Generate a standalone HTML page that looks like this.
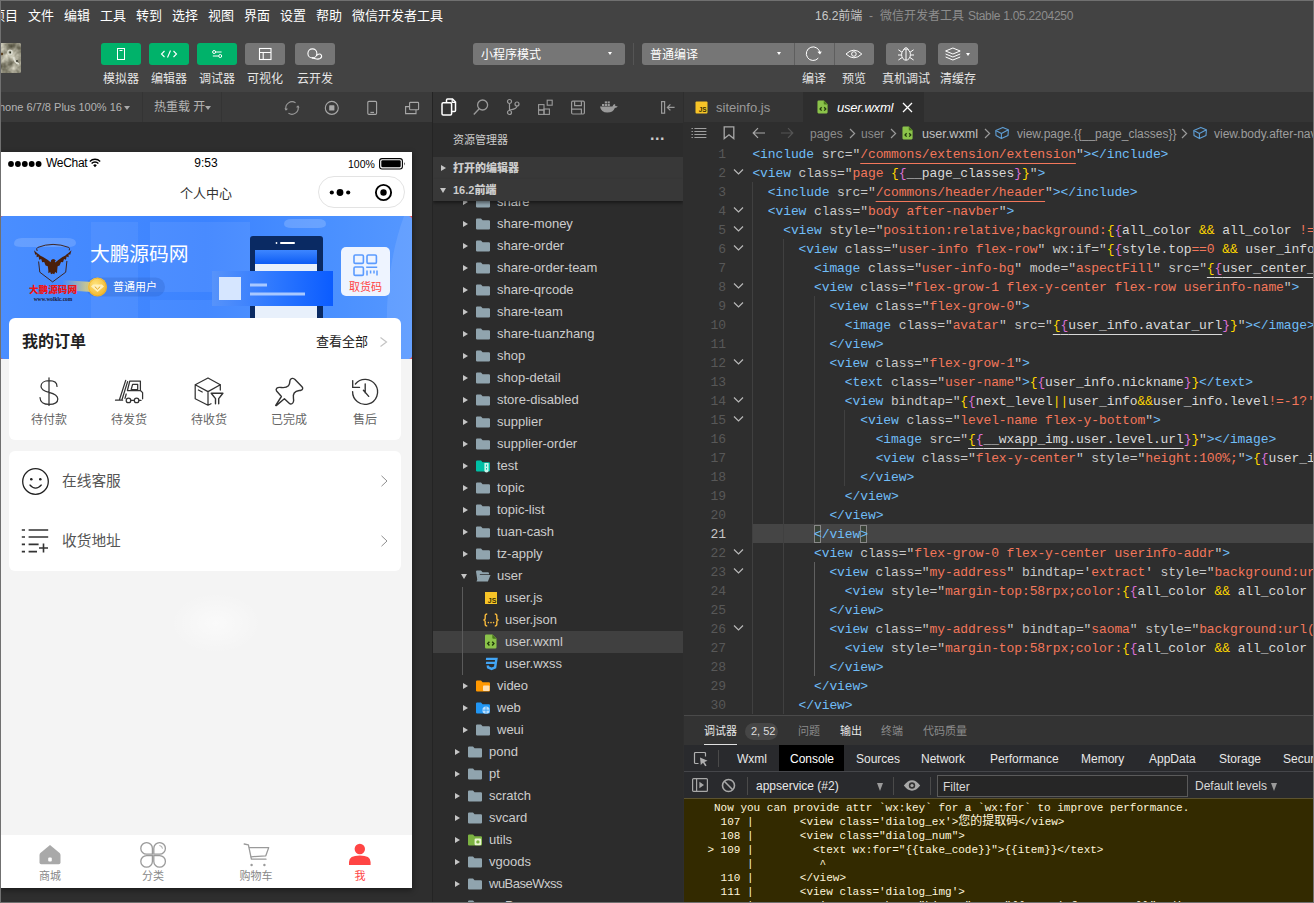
<!DOCTYPE html>
<html lang="zh-CN">
<head>
<meta charset="utf-8">
<title>16.2前端 - 微信开发者工具 Stable 1.05.2204250</title>
<style>
*{box-sizing:border-box;margin:0;padding:0}
html,body{width:1314px;height:903px;overflow:hidden;background:#2e2e2e}
body{font-family:"Liberation Sans","Noto Sans CJK SC",sans-serif;color:#ccc;position:relative;font-size:12px}
.abs{position:absolute}
.nw{white-space:nowrap}
/* ---------- top bars ---------- */
#menubar{left:0;top:0;width:1314px;height:30px;background:#434343}
#menubar .mi{position:absolute;top:6px;font-size:13px;line-height:20px;color:#fff;white-space:nowrap}
#title{position:absolute;top:6px;left:815px;font-size:12px;line-height:20px;white-space:nowrap;color:#8d8d8d}
#title b{font-weight:normal;color:#c8c8c8}
#toolbar{left:0;top:30px;width:1314px;height:62px;background:#434343}
.tbtn{position:absolute;top:13px;width:40px;height:22px;border-radius:3px;background:#00b26a}
.tbtn.g{background:#767676}
.tlab{position:absolute;top:39.5px;font-size:12px;line-height:18px;color:#e6e6e6;white-space:nowrap;text-align:center}
.dd{position:absolute;top:13px;height:22px;background:#767676;border-radius:3px;color:#fff;font-size:12px;line-height:24px;padding-left:8px;white-space:nowrap}
.caret{position:absolute;width:0;height:0;border-left:2.500px solid transparent;border-right:2.500px solid transparent;border-top:3.500px solid #fff}
/* ---------- simulator ---------- */
#sim{left:0;top:92px;width:432px;height:811px;background:#2e2e2e}
#devbar{left:0;top:0;width:432px;height:30px;background:#3a3a3a}
#vdiv{left:432px;top:92px;width:1px;height:811px;background:#242424}

/* device bar */
#devbar span{position:absolute;top:6px;font-size:11px;line-height:18px;color:#b4b4b4;white-space:nowrap}
.dcar{position:absolute;top:14px;width:0;height:0;border-left:3px solid transparent;border-right:3px solid transparent;border-top:4px solid #a8a8a8}
.dvl{position:absolute;top:0;width:1px;height:30px;background:#343434}
/* phone */
#phone{left:0;top:60px;width:412px;height:736px;background:#f4f4f4;overflow:hidden;color:#000;box-shadow:0 2px 6px rgba(0,0,0,.45);font-family:"Liberation Sans","Noto Sans CJK SC",sans-serif}
#pstat{left:0;top:0;width:412px;height:64px;background:#fff}
#banner{left:0;top:64px;width:412px;height:143px;overflow:hidden;border-radius:3px}
.card{position:absolute;left:9px;width:392px;background:#fff;border-radius:6px}
.oi{position:absolute;top:94px;width:60px;margin-left:-30px;text-align:center;font-size:12px;line-height:16px;color:#666;white-space:nowrap}
.oic{position:absolute;top:58px;width:32px;height:32px;margin-left:-16px}
.row{position:absolute;left:0;width:392px;height:60px}
.row span{position:absolute;left:53px;top:20px;font-size:14.7px;line-height:20px;color:#555;white-space:nowrap}
#tabbar{left:0;top:683px;width:412px;height:53px;background:#fff}
.tl{position:absolute;top:34px;width:60px;text-align:center;font-size:11px;line-height:14px;color:#888;white-space:nowrap}
.tab{position:absolute;top:0;width:103px;height:53px;text-align:center}
.tab span{position:absolute;left:0;width:103px;top:34px;font-size:11px;line-height:14px;color:#8a8a8a}
.tab svg{position:absolute;left:38px;top:6px}
/* ---------- explorer ---------- */
#side{left:433px;top:92px;width:250px;height:811px;background:#2c2c2c;overflow:hidden}
#actbar{left:0;top:0;width:250px;height:31px;background:#333}

#side .tr{position:absolute;left:0;width:250px;height:22px;font-size:13px;line-height:22px;color:#ccc;white-space:nowrap}
#side .tr.sel{background:#404040}
#side .tr b{position:absolute;top:0;font-weight:normal}
.arr{position:absolute;top:8px;width:0;height:0;border-top:3.5px solid transparent;border-bottom:3.5px solid transparent;border-left:5px solid #c5c5c5}
.arrd{position:absolute;top:9px;width:0;height:0;border-left:3.5px solid transparent;border-right:3.5px solid transparent;border-top:5px solid #c5c5c5}
.fi{position:absolute;top:4px}
.sh{position:absolute;left:0;width:250px;height:22px;background:#383838;font-size:11px;font-weight:bold;line-height:22px;color:#ccc}
.sh b{position:absolute;left:20px;top:0}
/* ---------- editor ---------- */
#ed{left:684px;top:92px;width:630px;height:811px;background:#2e2e2e;overflow:hidden}

#tabs{left:0;top:0;width:630px;height:30px;background:#353535}
.tab1{position:absolute;top:0;height:30px;font-size:13px;line-height:31px;white-space:nowrap}
#bc{left:0;top:30px;width:630px;height:22px;background:#2e2e2e;font-size:12px;line-height:22px;color:#9d9d9d;white-space:nowrap}
#bc span{position:absolute;top:1px}
#code{left:0;top:52px;width:630px;height:571px;overflow:hidden;font-family:"Liberation Mono","DejaVu Sans Mono",monospace;font-size:13px;letter-spacing:-0.1px}
.ln{position:absolute;left:0;width:630px;height:19px;line-height:19px;white-space:pre}
.ln .no{position:absolute;left:0;top:1px;width:42px;text-align:right;color:#585858}
.ln .fd{position:absolute;left:49px;top:5px}
.ln .tx{position:absolute;left:68.400px;top:1px;color:#c8c8c8}
.t{color:#70bdf7}.a{color:#c8c8c8}.s{color:#f3775b}.y{color:#ffd700}.m{color:#da70d6}.v{color:#d8d8d8}.u{text-decoration:underline;text-underline-offset:5px;text-decoration-thickness:1px}
.ig{position:absolute;width:1px;background:#404040}

#panel{background:#333;border-top:1px solid #4a4a4a}
#ptabs span{position:absolute;top:7px;font-size:11px;line-height:16px;color:#8a8a8a;white-space:nowrap}
#dtabs{left:0;top:29px;width:630px;height:26px;background:#292a2d}
#dtabs span{position:absolute;top:1px;font-size:12px;line-height:26px;color:#e8e8e8;white-space:nowrap}
#dtool{left:0;top:55px;width:630px;height:27px;background:#292a2d;border-top:1px solid #45464a}
#cons{left:0;top:82px;width:630px;height:106px;background:#332a00;font-family:"Liberation Mono","Noto Sans CJK SC",monospace;font-size:11px;color:#fff6dc;overflow:hidden;border-top:1px solid #5c5330}
#cons div{position:absolute;left:0;white-space:pre;height:14px;line-height:14px}
</style>
</head>
<body>
<div id="menubar" class="abs"><span class="mi" style="left:-8px">项目</span><span class="mi" style="left:28px">文件</span><span class="mi" style="left:64px">编辑</span><span class="mi" style="left:100px">工具</span><span class="mi" style="left:136px">转到</span><span class="mi" style="left:172px">选择</span><span class="mi" style="left:208px">视图</span><span class="mi" style="left:244px">界面</span><span class="mi" style="left:280px">设置</span><span class="mi" style="left:316px">帮助</span><span class="mi" style="left:352px">微信开发者工具</span><span id="title"><b>16.2前端</b><span style="position:absolute;left:54px;top:0">-</span><span style="position:absolute;left:65px;top:0">微信开发者工具</span><span id="stb" style="position:absolute;left:153px;top:0;font-size:12px;letter-spacing:-0.3px">Stable 1.05.2204250</span></span></div>
<div id="toolbar" class="abs">
<div class="abs" id="avatar" style="left:0;top:13px;width:21px;height:30px;border-radius:0 2px 2px 0;overflow:hidden"><svg width="21" height="30" viewBox="0 0 21 30"><defs><filter id="stone" x="0" y="0" width="100%" height="100%" color-interpolation-filters="sRGB"><feTurbulence type="fractalNoise" baseFrequency="0.11" numOctaves="3" seed="11"/><feColorMatrix type="matrix" values="0.8 0 0 0 0.2  0.8 0 0 0 0.19  0.8 0 0 0 0.12  0 0 0 0 1"/></filter></defs><rect width="21" height="30" fill="#9a9888"/><rect width="21" height="30" filter="url(#stone)"/><ellipse cx="10" cy="9.500" rx="2.200" ry="2.400" fill="none" stroke="#d8d8cc" stroke-width="1.300"/><circle cx="10.200" cy="9.500" r="0.900" fill="#2a3020"/><path d="M13.500 14 q1 6 5.500 7" fill="none" stroke="#deded2" stroke-width="1.600"/><circle cx="17" cy="18" r="1" fill="#3a3a30"/><circle cx="2" cy="11" r="1.200" fill="#5a4020"/></svg></div>
<div class="tbtn" style="left:101px"><svg width="40" height="22" viewBox="0 0 40 22"><rect x="16.5" y="5.5" width="7" height="11" fill="none" stroke="#fff" stroke-width="1"/><line x1="18.5" y1="7.500" x2="21.500" y2="7.500" stroke="#fff" stroke-width="1"/></svg></div>
<div class="tbtn" style="left:149px"><svg width="40" height="22" viewBox="0 0 40 22"><path d="M15.5 8 L12.5 11 L15.5 14 M24.5 8 L27.5 11 L24.5 14 M21.5 7.5 L18.5 14.5" fill="none" stroke="#fff" stroke-width="1.1"/></svg></div>
<div class="tbtn" style="left:197px"><svg width="40" height="22" viewBox="0 0 40 22"><path d="M18.800 9 H24.600 M15.800 13 H21.600" fill="none" stroke="#fff" stroke-width="1"/><circle cx="17.100" cy="9" r="1.500" fill="none" stroke="#fff"/><circle cx="23.200" cy="13" r="1.500" fill="none" stroke="#fff"/></svg></div>
<div class="tbtn g" style="left:245px"><svg width="40" height="22" viewBox="0 0 40 22"><rect x="14.500" y="5.500" width="11.500" height="11" fill="none" stroke="#fff" stroke-width="1.100"/><path d="M14.500 9.500 H26 M18.200 9.500 V16.500" stroke="#fff" stroke-width="1.100" fill="none"/></svg></div>
<div class="tbtn g" style="left:295px"><svg width="40" height="22" viewBox="0 0 40 22"><circle cx="17.400" cy="10.400" r="4.500" fill="none" stroke="#fff" stroke-width="1.100"/><path d="M21.300 12.600 Q24.600 9.800 26.300 12 Q27.400 14.200 25 15.600 Q23.600 16.300 21.500 16 L17 14.900" fill="none" stroke="#fff" stroke-width="1.100"/></svg></div>
<span class="tlab" style="left:103px">模拟器</span>
<span class="tlab" style="left:151px">编辑器</span>
<span class="tlab" style="left:199px">调试器</span>
<span class="tlab" style="left:247px">可视化</span>
<span class="tlab" style="left:297px">云开发</span>
<div class="dd" style="left:473px;width:152px">小程序模式<i class="caret" style="right:13px;top:9px"></i></div>
<div class="abs" style="left:633px;top:13px;width:1px;height:22px;background:#555"></div>
<div class="dd" style="left:642px;width:232px;border-radius:3px">普通编译<i class="caret" style="right:93px;top:9px"></i></div>
<div class="abs" style="left:794px;top:13px;width:1px;height:22px;background:#5e5e5e"></div>
<div class="abs" style="left:834px;top:13px;width:1px;height:22px;background:#5e5e5e"></div>
<svg class="abs" style="left:795px;top:13px" width="39" height="22" viewBox="0 0 39 22"><path d="M23.300 15.100 A6.800 6.800 0 1 1 24.900 10.100" fill="none" stroke="#fff" stroke-width="1"/><path d="M22.400 8.800 L25 11.600 L26.800 8.400 Z" fill="#fff"/></svg>
<svg class="abs" style="left:835px;top:13px" width="39" height="22" viewBox="0 0 39 22"><path d="M11 11 Q18.900 3.400 26.800 11 Q18.900 18.600 11 11 Z" fill="none" stroke="#fff" stroke-width="1"/><circle cx="18.900" cy="11" r="2.300" fill="none" stroke="#fff"/></svg>
<div class="tbtn g" style="left:886px"><svg width="40" height="22" viewBox="0 0 40 22"><ellipse cx="20" cy="11.600" rx="4.400" ry="5.600" fill="none" stroke="#fff" stroke-width="1"/><path d="M17.400 6.800 Q20 2.600 22.600 6.800 M20 6.600 V17 M12.400 6.800 L15.900 9.200 M27.600 6.800 L24.100 9.200 M12 12 H15.600 M28 12 H24.400 M12.400 17 L16 14.600 M27.600 17 L24 14.600" fill="none" stroke="#fff" stroke-width="1"/></svg></div>
<div class="tbtn g" style="left:938px"><svg width="40" height="22" viewBox="0 0 40 22"><path d="M7.600 8 L14.900 5 L22.200 8 L14.900 11 Z M7.600 11 L14.900 14 L22.200 11 M7.600 14 L14.900 17 L22.200 14" fill="none" stroke="#fff" stroke-width="1" stroke-linejoin="round"/></svg><i class="caret" style="left:28px;top:9.500px"></i></div>
<span class="tlab" style="left:802px">编译</span>
<span class="tlab" style="left:842px">预览</span>
<span class="tlab" style="left:882px">真机调试</span>
<span class="tlab" style="left:940px">清缓存</span>
</div>
<div id="sim" class="abs"><div id="devbar" class="abs">
<span style="left:-1px">hone 6/7/8 Plus 100% 16</span><i class="dcar" style="left:124px"></i>
<i class="dvl" style="left:142px"></i>
<span style="left:154px;font-size:12px">热重载 开</span><i class="dcar" style="left:205px"></i>
<i class="dvl" style="left:221px"></i>
<svg class="abs" style="left:283px;top:7px" width="18" height="18" viewBox="0 0 18 18"><path d="M3 10.400 A6.200 6.200 0 0 1 12.600 3.900 M15 7.600 A6.200 6.200 0 0 1 5.400 14.100" fill="none" stroke="#9a9a9a" stroke-width="1.100"/><path d="M2 9.200 L3 10.800 L4.400 9.600 M16 8.800 L15 7.200 L13.600 8.400" fill="none" stroke="#9a9a9a" stroke-width="1.100"/></svg>
<svg class="abs" style="left:323px;top:7px" width="18" height="18" viewBox="0 0 18 18"><circle cx="8.800" cy="8.900" r="6.500" fill="none" stroke="#a8a8a8" stroke-width="1.100"/><rect x="6.200" y="6.300" width="5.200" height="5.200" rx="0.600" fill="#a8a8a8"/></svg>
<svg class="abs" style="left:363px;top:7px" width="18" height="18" viewBox="0 0 18 18"><rect x="4.800" y="2.400" width="8.800" height="13" rx="1.200" fill="none" stroke="#a8a8a8" stroke-width="1.100"/><path d="M7.400 13.400 h3.600" stroke="#a8a8a8" stroke-width="1.100"/></svg>
<svg class="abs" style="left:403px;top:7px" width="18" height="18" viewBox="0 0 18 18"><rect x="6.600" y="3.400" width="9" height="7.400" rx="0.800" fill="none" stroke="#a8a8a8" stroke-width="1.100"/><path d="M6.600 7.600 h-4 v7 h10.400 v-3.800" fill="none" stroke="#a8a8a8" stroke-width="1.100"/></svg>
</div>
<div id="phone" class="abs">
 <div id="pstat" class="abs">
  <svg class="abs" style="left:7px;top:8px" width="36" height="8" viewBox="0 0 36 8"><circle cx="4" cy="4" r="2.900" fill="#000"/><circle cx="10.900" cy="4" r="2.900" fill="#000"/><circle cx="17.800" cy="4" r="2.900" fill="#000"/><circle cx="24.700" cy="4" r="2.900" fill="#000"/><circle cx="31.600" cy="4" r="2.900" fill="#000"/></svg>
  <span class="abs nw" style="left:46px;top:3px;font-size:12px;line-height:16px;color:#000;letter-spacing:-0.300px">WeChat</span>
  <svg class="abs" style="left:89px;top:6px" width="12" height="10" viewBox="0 0 12 10"><path d="M0.800 3.400 a7.400 7.400 0 0 1 10.400 0 M2.600 5.400 a4.800 4.800 0 0 1 6.800 0" fill="none" stroke="#000" stroke-width="1.350"/><path d="M4.200 7.200 a2.600 2.600 0 0 1 3.600 0 L6 9.300 z" fill="#000"/></svg>
  <span class="abs nw" style="left:186px;width:40px;text-align:center;top:3px;font-size:12px;line-height:16px;color:#000">9:53</span>
  <span class="abs nw" style="left:348px;top:4px;font-size:10.500px;line-height:16px;color:#000">100%</span>
  <svg class="abs" style="left:379px;top:6px" width="27" height="12" viewBox="0 0 27 12"><rect x="0.6" y="0.6" width="22.8" height="10.4" rx="2.4" fill="none" stroke="#000" stroke-width="1.1"/><rect x="2.3" y="2.3" width="19.4" height="7" rx="1.2" fill="#000"/><path d="M25 4 q1.4 1.8 0 3.6 z" fill="#000"/></svg>
  <span class="abs nw" style="left:0;width:412px;text-align:center;top:32px;font-size:13px;line-height:20px;color:#333">个人中心</span>
  <div class="abs" style="left:318px;top:24px;width:87px;height:32px;border:1px solid #e3e3e3;border-radius:16px;background:#fff">
   <svg class="abs" style="left:0;top:0" width="85" height="30" viewBox="0 0 85 30"><circle cx="12.800" cy="15.500" r="2.100" fill="#000"/><circle cx="21" cy="15.500" r="3.400" fill="#000"/><circle cx="29.200" cy="15.500" r="2.100" fill="#000"/><circle cx="64.5" cy="15.5" r="7.6" fill="none" stroke="#000" stroke-width="1.9"/><circle cx="64.5" cy="15.5" r="3.2" fill="#000"/></svg>
  </div>
 </div>
 <div class="abs" style="left:0;top:64px;width:412px;height:143px;background:#ff4544"></div><div id="banner" class="abs">
<svg class="abs" style="left:0;top:0" width="412" height="143" viewBox="0 0 412 143">
<defs>
<linearGradient id="bg1" x1="0" x2="1" y1="0" y2="0"><stop offset="0" stop-color="#4a8eff"/><stop offset="0.5" stop-color="#3c83ff"/><stop offset="0.8" stop-color="#4a90ff"/><stop offset="1" stop-color="#5597ff"/></linearGradient>
<linearGradient id="scr" x1="0" x2="0" y1="0" y2="1"><stop offset="0" stop-color="#3d86ff"/><stop offset="1" stop-color="#0d5cf5"/></linearGradient>
<linearGradient id="crd" x1="0" x2="1" y1="0" y2="0"><stop offset="0" stop-color="#5793fa"/><stop offset="0.55" stop-color="#2b76ff"/><stop offset="1" stop-color="#0b5cff"/></linearGradient>
<radialGradient id="coin" cx="0.4" cy="0.35" r="0.7"><stop offset="0" stop-color="#ffe27a"/><stop offset="1" stop-color="#f0b429"/></radialGradient>
<linearGradient id="glow" x1="0" x2="1" y1="0" y2="0"><stop offset="0" stop-color="#ffe066" stop-opacity="0"/><stop offset="1" stop-color="#ffe066" stop-opacity="0.85"/></linearGradient>
</defs>
<rect width="412" height="143" rx="3" fill="url(#bg1)"/>
<rect x="91" y="6" width="47" height="137" fill="#fff" opacity="0.06"/>
<rect x="150" y="6" width="100" height="70" fill="#fff" opacity="0.07"/>
<rect x="150" y="84" width="100" height="59" fill="#fff" opacity="0.05"/>
<path d="M14 28 q0 -6 8 -6 h44 q10 0 10 5 q0 4 -8 4 h-46 q-8 0 -8 -3 z" fill="#fff" opacity="0.16"/>
<path d="M284 8 q0 -5 8 -5 h26 q8 0 8 5 q0 4 -8 4 h-26 q-8 0 -8 -4 z" fill="#fff" opacity="0.18"/>
<path d="M412 0 h-8 q-22 60 -16 143 h24 z" fill="#fff" opacity="0.1"/>
<!-- phone -->
<rect x="250" y="20" width="73" height="140" rx="3" fill="#0a2a63"/>
<circle cx="276.500" cy="27" r="0.9" fill="#fff"/><rect x="280" y="26" width="15" height="2" rx="1" fill="#fff"/>
<rect x="255" y="34" width="62" height="14" fill="url(#scr)"/>
<rect x="255" y="48" width="62" height="95" fill="#e8f0fb"/>
<rect x="260" y="129" width="52" height="14" fill="#cfe0fa"/>
<!-- card -->
<rect x="212" y="55" width="121" height="35" fill="url(#crd)"/>
<rect x="219" y="61" width="22" height="23" fill="#d6e6ff"/>
<rect x="250" y="67.500" width="17" height="3" fill="#a8c8ff"/>
<rect x="250" y="76.500" width="55" height="3" fill="#a8c8ff"/>
<!-- level pill -->
<rect x="86" y="61.500" width="79" height="19" rx="9.500" fill="#2a5fc0" opacity="0.28"/>
<path d="M62 64 L92 66 L92 76 L62 74 z" fill="url(#glow)"/>
<circle cx="97.500" cy="71" r="9.500" fill="url(#coin)"/>
<circle cx="97.500" cy="71" r="8.700" fill="none" stroke="#e3a51f" stroke-width="0.8" opacity="0.7"/>
<path d="M93 68.500 h9 l2 2 l-6.500 5.500 l-6.500 -5.500 z" fill="#fff3c4" opacity="0.9"/>
<path d="M94.800 70.600 l2.700 2.600 l2.700 -2.600" fill="none" stroke="#e3a51f" stroke-width="1"/>
<!-- eagle logo -->
<path d="M37.200 35 q-1.500 -2.600 0.600 -3.600 q15 -6 31 0 q1.200 1 0.400 3" fill="none" stroke="#3b1a0b" stroke-width="0.900"/>
<path d="M38.600 45.500 L39.800 56.200 L52.600 65.900 L65.700 56.200 L66.900 45" fill="none" stroke="#3b1a0b" stroke-width="0.900"/>
<path d="M34 34.300 Q38 38.600 43 41 Q47.500 43.500 50.600 46.200 Q50.600 43.400 53 43 Q55 43 56 45 L54.800 45.300 L55.200 46.600 Q58 44 62.500 41 Q67.500 38.600 71.500 34.300 L70.200 38.700 L68.600 38.300 L68.600 41.200 L66.600 40.600 L66 43.700 L64 43.100 L63 46.200 L61 46 L59.600 49.600 L57.600 50.200 L57.200 54 L57 57.200 L55.200 56 L54.200 58.200 L52.700 57.400 L51 58.200 L50.200 56 L48.400 57.200 L48.300 54 L47.800 50.200 L45.600 49.600 L44.200 46 L42.200 46.200 L41.200 43.100 L39.200 43.700 L38.600 40.600 L36.600 41.200 L36.600 38.300 L35.200 38.700 Z" fill="#4a1f0b"/>
</svg>
<span class="abs nw" style="left:28px;top:67px;width:50px;text-align:center;font-size:9.6px;line-height:14px;font-weight:900;color:#f01414;letter-spacing:0">大鹏源码网</span>
<span class="abs nw" style="left:28px;top:79px;width:50px;text-align:center;font-size:5.4px;line-height:8px;font-weight:bold;color:#1a1a3a;font-family:'Liberation Serif',serif">www.wolklc.com</span>
<span class="abs nw" style="left:90px;top:24px;font-size:19.8px;line-height:28px;color:#fff;letter-spacing:-0.1px">大鹏源码网</span>
<span class="abs nw" style="left:113px;top:63px;font-size:11px;line-height:16px;color:#fff">普通用户</span>
<div class="abs" style="left:341px;top:31px;width:49px;height:49px;border-radius:5px;background:#eef4ff">
<svg class="abs" style="left:12px;top:7px" width="25" height="23" viewBox="0 0 25 23"><rect x="1" y="1" width="9.400" height="8.400" rx="1.200" fill="none" stroke="#5b9bff" stroke-width="1.600"/><rect x="14" y="1" width="9.400" height="8.400" rx="1.200" fill="none" stroke="#5b9bff" stroke-width="1.600"/><rect x="1" y="13" width="9.400" height="8.400" rx="1.200" fill="none" stroke="#5b9bff" stroke-width="1.600"/><path d="M13.200 13.200 h11 M14 16.500 v5 M17.600 16.500 v3 M21 16.500 v3 M24 16.500 v5" stroke="#5b9bff" stroke-width="1.500" fill="none"/></svg>
<span class="abs nw" style="left:0;width:49px;text-align:center;top:32px;font-size:11px;line-height:16px;color:#ff4544">取货码</span>
</div>
</div>
 <div class="card" style="top:166px;height:122px">
  <span class="abs nw" style="left:13px;top:13px;font-size:16px;line-height:22px;font-weight:bold;color:#222">我的订单</span>
  <span class="abs nw" style="left:307px;top:14px;font-size:13px;line-height:20px;color:#222">查看全部</span>
  <svg class="abs" style="left:370px;top:18px" width="10" height="12" viewBox="0 0 10 12"><path d="M1.5 1.5 L7.5 6 L1.5 10.5" fill="none" stroke="#c4c4c4" stroke-width="1.2"/></svg>
  <svg class="abs" style="left:16px;top:52px" width="376" height="42" viewBox="25 370 376 42" fill="none" stroke="#333" stroke-width="1.25" stroke-linecap="round" stroke-linejoin="round">
<path d="M49 377.800 V405.400 M57 386.400 C57 382.600 53.500 380.700 49 380.700 C44.500 380.700 41 382.800 41 386.200 C41 390 45 391.400 49 392.400 C53.500 393.500 57.800 395 57.800 399 C57.800 402.600 54 404.400 49 404.400 C44 404.400 40 402 40 397.600"/>
<path d="M125.700 380.400 L119.300 400.200 M127.600 381.600 L121.800 400.200 M115.500 400.200 H122.600"/>
<path d="M127.400 390.500 L129.800 381 H140.400 V390.500 M132.600 384.400 H137.700 V389.500 H131.200 Z M127.400 390.500 H140.400 L142.600 392.600 V398.800 M126.200 394 L125 398.400 M131 400.400 H134.200 M139 400.400 H141"/>
<circle cx="128.500" cy="400.400" r="2.300"/><circle cx="136.600" cy="400.400" r="2.300"/>
<path d="M208 378 L220.300 384.700 L208 391.600 L195.200 384.700 Z M195.200 384.700 V398.800 L208 405.200 V391.600 M220.300 384.700 V390 M208 405.200 L211 403.700 M198.400 390 L202.200 392"/>
<path d="M211.200 393.200 H222.900 L218.700 398.600 V403.800 M211.200 393.200 L215.500 398.600 V403.800" stroke-width="1.400"/>
<path d="M275.700 405.300 L281.400 396.500 L276.600 391 C275.200 388.800 277.200 387.200 280.100 387.400 C283 387.700 286 388.400 288.400 385.800 C290.800 383 289 380.600 290.600 379.200 C292 377.800 293.600 378.200 295 379.600 L302 386.800 C303.200 388.200 302.800 389.800 301 390.200 C298.500 390.800 296.200 390.400 294.200 393 C292.200 395.800 294 398.600 293.600 401 C293.200 403.600 291 405 289.200 403.300 L284.400 398.800 L276.200 405.600 Z" stroke-width="1.400"/>
<path d="M352.600 391.600 A12.500 12.500 0 1 0 355.400 384 M352.700 380.600 V387.400 H359.500 M365.200 383.800 V392.800 M363.400 390.200 L368.700 396.400" stroke-width="1.350"/>
</svg>
  <span class="oi" style="left:40px">待付款</span>
  <span class="oi" style="left:120px">待发货</span>
  <span class="oi" style="left:200px">待收货</span>
  <span class="oi" style="left:280px">已完成</span>
  <span class="oi" style="left:356px">售后</span>
 </div>
 <div class="card" style="top:299px;height:120px">
  <div class="row" style="top:0"><span>在线客服</span>
   <svg class="abs" style="left:12px;top:16px" width="30" height="30" viewBox="0 0 30 30"><circle cx="14.5" cy="14.5" r="12.8" fill="none" stroke="#222" stroke-width="1.3"/><circle cx="10.3" cy="12.2" r="1.3" fill="#222"/><circle cx="19.3" cy="12.2" r="1.3" fill="#222"/><path d="M8.6 17.6 q6 7 12 0" fill="none" stroke="#222" stroke-width="1.4"/></svg>
   <svg class="abs" style="left:371px;top:24px" width="9" height="12" viewBox="0 0 9 12"><path d="M1.5 0.8 L7 6 L1.5 11.2" fill="none" stroke="#8f8f8f" stroke-width="1"/></svg></div>
  <div class="row" style="top:60px"><span>收货地址</span>
   <svg class="abs" style="left:12px;top:17px" width="30" height="28" viewBox="0 0 30 28"><path d="M0.8 2 h3.2 M7.6 2 h19.6 M0.8 9 h3.2 M7.6 9 h19.6 M0.8 16.4 h3.2 M7.6 16.4 h10 M0.8 23.6 h3.2 M7.6 23.6 h8.4 M18 20 h9 M22.5 15.5 v9" fill="none" stroke="#333" stroke-width="1.6"/></svg>
   <svg class="abs" style="left:371px;top:24px" width="9" height="12" viewBox="0 0 9 12"><path d="M1.5 0.8 L7 6 L1.5 11.2" fill="none" stroke="#8f8f8f" stroke-width="1"/></svg></div>
 </div>
 <div class="abs" style="left:170px;top:440px;width:92px;height:62px;border-radius:50%;background:radial-gradient(ellipse at center,rgba(255,255,255,.55) 0%,rgba(255,255,255,0) 70%)"></div>
 <div id="tabbar" class="abs">
<svg class="abs" style="left:0;top:0" width="412" height="53" viewBox="0 835 412 53"><path d="M50 845 L59.600 853 Q60.500 853.800 60.500 855 V862.600 Q60.500 864.300 58.800 864.300 H41.200 Q39.500 864.300 39.500 862.600 V855 Q39.500 853.800 40.400 853 Z" fill="#a9a9a9"/><rect x="48.200" y="857.600" width="3.600" height="3.800" rx="1" fill="#fff"/>
<g fill="none" stroke="#9a9a9a" stroke-width="1.300"><path d="M152.400 854.200 H146.600 A5.800 5.800 0 1 1 152.400 848.400 Z"/><path d="M153.800 854.200 V848.400 A5.800 5.800 0 1 1 159.600 854.200 Z"/><path d="M152.400 855.600 V861.400 A5.800 5.800 0 1 1 146.600 855.600 Z"/><path d="M153.800 855.600 H159.600 A5.800 5.800 0 1 1 153.800 861.400 Z"/><path d="M159.400 845.600 A3 3 0 0 1 162.400 848.600" stroke-width="0.900"/></g>
<g fill="none" stroke="#9a9a9a" stroke-width="1.300" stroke-linejoin="round" stroke-linecap="round"><path d="M244.200 844 L248.400 844.800 L251.400 859.200 H266"/><path d="M249.400 847.600 H268.700 L265.800 855.800 L251 856.800"/></g><circle cx="251.600" cy="865" r="1.200" fill="#9a9a9a"/><circle cx="264.400" cy="865" r="1.200" fill="#9a9a9a"/>
<circle cx="359.800" cy="849" r="5.200" fill="#ff4544"/><path d="M349 864.900 V862 Q349 855.600 359.800 855.600 Q370.600 855.600 370.600 862 V864.900 Z" fill="#ff4544"/>
</svg>
<span class="tl" style="left:20px">商城</span><span class="tl" style="left:123px">分类</span><span class="tl" style="left:226px">购物车</span><span class="tl" style="left:330px;color:#ff4544">我</span>
 </div>
</div></div>
<div id="vdiv" class="abs"></div>
<div id="side" class="abs"><div id="actbar" class="abs">
<svg class="abs" style="left:6px;top:5px" width="20" height="20" viewBox="0 0 20 20"><path d="M7.5 5.5 v-2.5 q0 -1 1 -1 h5 l3 3 v8.5 q0 1 -1 1 h-2.5" fill="none" stroke="#fff" stroke-width="1.5"/><path d="M13.2 2.2 v3.2 h3.2" fill="none" stroke="#fff" stroke-width="1.2"/><rect x="3" y="5.8" width="9.6" height="12.2" rx="1.2" fill="none" stroke="#fff" stroke-width="1.5"/></svg>
<svg class="abs" style="left:39px;top:6px" width="18" height="18" viewBox="0 0 18 18"><circle cx="10.6" cy="7" r="5" fill="none" stroke="#9a9a9a" stroke-width="1.3"/><path d="M7.2 10.8 L1.8 16.4" stroke="#9a9a9a" stroke-width="1.4"/></svg>
<svg class="abs" style="left:71px;top:6px" width="18" height="18" viewBox="0 0 18 18"><circle cx="5.5" cy="3.5" r="2" fill="none" stroke="#9a9a9a" stroke-width="1.2"/><circle cx="5.5" cy="14.5" r="2" fill="none" stroke="#9a9a9a" stroke-width="1.2"/><circle cx="13" cy="6" r="2" fill="none" stroke="#9a9a9a" stroke-width="1.2"/><path d="M5.5 5.5 v7 M13 8 q0 3 -7.5 4" fill="none" stroke="#9a9a9a" stroke-width="1.2"/></svg>
<svg class="abs" style="left:103px;top:6px" width="18" height="18" viewBox="0 0 18 18"><rect x="2.6" y="6.6" width="5.4" height="5.4" fill="none" stroke="#9a9a9a" stroke-width="1.1"/><rect x="2.6" y="12" width="5.4" height="4.4" fill="none" stroke="#9a9a9a" stroke-width="1.1"/><rect x="8" y="11" width="5.4" height="5.4" fill="none" stroke="#9a9a9a" stroke-width="1.1"/><rect x="11.2" y="2.2" width="5" height="5" fill="none" stroke="#9a9a9a" stroke-width="1.1"/></svg>
<svg class="abs" style="left:136px;top:6px" width="18" height="18" viewBox="0 0 18 18"><rect x="2.6" y="3.2" width="12.8" height="12.8" rx="1.2" fill="none" stroke="#9a9a9a" stroke-width="1.2"/><path d="M5.6 3.2 v4.4 h6.8 v-4.4 M2.6 11.2 h9.8 v4.8" fill="none" stroke="#9a9a9a" stroke-width="1.2"/></svg>
<svg class="abs" style="left:166px;top:6px" width="20" height="18" viewBox="0 0 20 18"><path d="M1 8.6 h12.4 q0.6 -2.6 2.6 -2.6 q0.4 1.2 0.2 2 q1.6 -0.2 2.6 0.6 q-1 1.4 -3 1.4 q-1.6 4.6 -7.4 4.6 q-6.4 0 -7.4 -6 z" fill="#9a9a9a"/><rect x="3" y="6" width="2.2" height="2" fill="#9a9a9a"/><rect x="5.8" y="6" width="2.2" height="2" fill="#9a9a9a"/><rect x="8.6" y="6" width="2.2" height="2" fill="#9a9a9a"/><rect x="5.8" y="3.4" width="2.2" height="2" fill="#9a9a9a"/><rect x="8.6" y="3.4" width="2.2" height="2" fill="#9a9a9a"/></svg>
<svg class="abs" style="left:226px;top:6px" width="18" height="18" viewBox="0 0 18 18"><rect x="2.6" y="3.6" width="3" height="11.6" fill="none" stroke="#9a9a9a" stroke-width="1.2"/><path d="M15.6 9.4 h-7 M11.4 6.4 l-3 3 l3 3" fill="none" stroke="#9a9a9a" stroke-width="1.3"/></svg>
</div>
<span class="abs nw" style="left:20px;top:39px;font-size:11px;line-height:18px;color:#ccc">资源管理器</span>
<span class="abs nw" style="left:217px;top:34px;font-size:16px;line-height:18px;color:#ccc;letter-spacing:0.5px;font-weight:bold">...</span>
<div id="tree" class="abs" style="left:0;top:-1px;width:250px;height:812px"><div class="tr" style="top:100px"><i class="arr" style="left:29.5px"></i><svg class="fi" style="left:42px" width="16" height="14" viewBox="0 0 16 14"><path d="M1 2.6 q0 -1.1 1.1 -1.1 h3.9 l1.6 1.7 h6.3 q1.1 0 1.1 1.1 v7.1 q0 1.1 -1.1 1.1 h-11.8 q-1.1 0 -1.1 -1.1 z" fill="#90a4ae"/></svg><b style="left:64px">share</b></div><div class="tr" style="top:122px"><i class="arr" style="left:29.5px"></i><svg class="fi" style="left:42px" width="16" height="14" viewBox="0 0 16 14"><path d="M1 2.6 q0 -1.1 1.1 -1.1 h3.9 l1.6 1.7 h6.3 q1.1 0 1.1 1.1 v7.1 q0 1.1 -1.1 1.1 h-11.8 q-1.1 0 -1.1 -1.1 z" fill="#90a4ae"/></svg><b style="left:64px">share-money</b></div><div class="tr" style="top:144px"><i class="arr" style="left:29.5px"></i><svg class="fi" style="left:42px" width="16" height="14" viewBox="0 0 16 14"><path d="M1 2.6 q0 -1.1 1.1 -1.1 h3.9 l1.6 1.7 h6.3 q1.1 0 1.1 1.1 v7.1 q0 1.1 -1.1 1.1 h-11.8 q-1.1 0 -1.1 -1.1 z" fill="#90a4ae"/></svg><b style="left:64px">share-order</b></div><div class="tr" style="top:166px"><i class="arr" style="left:29.5px"></i><svg class="fi" style="left:42px" width="16" height="14" viewBox="0 0 16 14"><path d="M1 2.6 q0 -1.1 1.1 -1.1 h3.9 l1.6 1.7 h6.3 q1.1 0 1.1 1.1 v7.1 q0 1.1 -1.1 1.1 h-11.8 q-1.1 0 -1.1 -1.1 z" fill="#90a4ae"/></svg><b style="left:64px">share-order-team</b></div><div class="tr" style="top:188px"><i class="arr" style="left:29.5px"></i><svg class="fi" style="left:42px" width="16" height="14" viewBox="0 0 16 14"><path d="M1 2.6 q0 -1.1 1.1 -1.1 h3.9 l1.6 1.7 h6.3 q1.1 0 1.1 1.1 v7.1 q0 1.1 -1.1 1.1 h-11.8 q-1.1 0 -1.1 -1.1 z" fill="#90a4ae"/></svg><b style="left:64px">share-qrcode</b></div><div class="tr" style="top:210px"><i class="arr" style="left:29.5px"></i><svg class="fi" style="left:42px" width="16" height="14" viewBox="0 0 16 14"><path d="M1 2.6 q0 -1.1 1.1 -1.1 h3.9 l1.6 1.7 h6.3 q1.1 0 1.1 1.1 v7.1 q0 1.1 -1.1 1.1 h-11.8 q-1.1 0 -1.1 -1.1 z" fill="#90a4ae"/></svg><b style="left:64px">share-team</b></div><div class="tr" style="top:232px"><i class="arr" style="left:29.5px"></i><svg class="fi" style="left:42px" width="16" height="14" viewBox="0 0 16 14"><path d="M1 2.6 q0 -1.1 1.1 -1.1 h3.9 l1.6 1.7 h6.3 q1.1 0 1.1 1.1 v7.1 q0 1.1 -1.1 1.1 h-11.8 q-1.1 0 -1.1 -1.1 z" fill="#90a4ae"/></svg><b style="left:64px">share-tuanzhang</b></div><div class="tr" style="top:254px"><i class="arr" style="left:29.5px"></i><svg class="fi" style="left:42px" width="16" height="14" viewBox="0 0 16 14"><path d="M1 2.6 q0 -1.1 1.1 -1.1 h3.9 l1.6 1.7 h6.3 q1.1 0 1.1 1.1 v7.1 q0 1.1 -1.1 1.1 h-11.8 q-1.1 0 -1.1 -1.1 z" fill="#90a4ae"/></svg><b style="left:64px">shop</b></div><div class="tr" style="top:276px"><i class="arr" style="left:29.5px"></i><svg class="fi" style="left:42px" width="16" height="14" viewBox="0 0 16 14"><path d="M1 2.6 q0 -1.1 1.1 -1.1 h3.9 l1.6 1.7 h6.3 q1.1 0 1.1 1.1 v7.1 q0 1.1 -1.1 1.1 h-11.8 q-1.1 0 -1.1 -1.1 z" fill="#90a4ae"/></svg><b style="left:64px">shop-detail</b></div><div class="tr" style="top:298px"><i class="arr" style="left:29.5px"></i><svg class="fi" style="left:42px" width="16" height="14" viewBox="0 0 16 14"><path d="M1 2.6 q0 -1.1 1.1 -1.1 h3.9 l1.6 1.7 h6.3 q1.1 0 1.1 1.1 v7.1 q0 1.1 -1.1 1.1 h-11.8 q-1.1 0 -1.1 -1.1 z" fill="#90a4ae"/></svg><b style="left:64px">store-disabled</b></div><div class="tr" style="top:320px"><i class="arr" style="left:29.5px"></i><svg class="fi" style="left:42px" width="16" height="14" viewBox="0 0 16 14"><path d="M1 2.6 q0 -1.1 1.1 -1.1 h3.9 l1.6 1.7 h6.3 q1.1 0 1.1 1.1 v7.1 q0 1.1 -1.1 1.1 h-11.8 q-1.1 0 -1.1 -1.1 z" fill="#90a4ae"/></svg><b style="left:64px">supplier</b></div><div class="tr" style="top:342px"><i class="arr" style="left:29.5px"></i><svg class="fi" style="left:42px" width="16" height="14" viewBox="0 0 16 14"><path d="M1 2.6 q0 -1.1 1.1 -1.1 h3.9 l1.6 1.7 h6.3 q1.1 0 1.1 1.1 v7.1 q0 1.1 -1.1 1.1 h-11.8 q-1.1 0 -1.1 -1.1 z" fill="#90a4ae"/></svg><b style="left:64px">supplier-order</b></div><div class="tr" style="top:364px"><i class="arr" style="left:29.5px"></i><svg class="fi" style="left:42px" width="16" height="14" viewBox="0 0 16 14"><path d="M1 2.6 q0 -1.1 1.1 -1.1 h3.9 l1.6 1.7 h6.3 q1.1 0 1.1 1.1 v7.1 q0 1.1 -1.1 1.1 h-11.8 q-1.1 0 -1.1 -1.1 z" fill="#00bfa5"/><path d="M9.400 4 h4.200 v7.400 q0 2 -2.100 2 q-2.100 0 -2.100 -2 z" fill="#c8f5ec"/><path d="M11.500 5.600 v2 M11.500 9 v1.600" stroke="#00bfa5" stroke-width="1"/></svg><b style="left:64px">test</b></div><div class="tr" style="top:386px"><i class="arr" style="left:29.5px"></i><svg class="fi" style="left:42px" width="16" height="14" viewBox="0 0 16 14"><path d="M1 2.6 q0 -1.1 1.1 -1.1 h3.9 l1.6 1.7 h6.3 q1.1 0 1.1 1.1 v7.1 q0 1.1 -1.1 1.1 h-11.8 q-1.1 0 -1.1 -1.1 z" fill="#90a4ae"/></svg><b style="left:64px">topic</b></div><div class="tr" style="top:408px"><i class="arr" style="left:29.5px"></i><svg class="fi" style="left:42px" width="16" height="14" viewBox="0 0 16 14"><path d="M1 2.6 q0 -1.1 1.1 -1.1 h3.9 l1.6 1.7 h6.3 q1.1 0 1.1 1.1 v7.1 q0 1.1 -1.1 1.1 h-11.8 q-1.1 0 -1.1 -1.1 z" fill="#90a4ae"/></svg><b style="left:64px">topic-list</b></div><div class="tr" style="top:430px"><i class="arr" style="left:29.5px"></i><svg class="fi" style="left:42px" width="16" height="14" viewBox="0 0 16 14"><path d="M1 2.6 q0 -1.1 1.1 -1.1 h3.9 l1.6 1.7 h6.3 q1.1 0 1.1 1.1 v7.1 q0 1.1 -1.1 1.1 h-11.8 q-1.1 0 -1.1 -1.1 z" fill="#90a4ae"/></svg><b style="left:64px">tuan-cash</b></div><div class="tr" style="top:452px"><i class="arr" style="left:29.5px"></i><svg class="fi" style="left:42px" width="16" height="14" viewBox="0 0 16 14"><path d="M1 2.6 q0 -1.1 1.1 -1.1 h3.9 l1.6 1.7 h6.3 q1.1 0 1.1 1.1 v7.1 q0 1.1 -1.1 1.1 h-11.8 q-1.1 0 -1.1 -1.1 z" fill="#90a4ae"/></svg><b style="left:64px">tz-apply</b></div><div class="tr" style="top:474px"><i class="arrd" style="left:28px"></i><svg class="fi" style="left:42px" width="16" height="14" viewBox="0 0 16 14"><path d="M1 2.6 q0 -1.1 1.1 -1.1 h3.9 l1.6 1.7 h5.3 q1.1 0 1.1 1.1 v1 h-9 l-2.6 6 z" fill="#90a4ae"/><path d="M4.2 5.9 h11.3 l-2.6 6.6 h-11.4 z" fill="#90a4ae"/></svg><b style="left:64px">user</b></div><div class="tr" style="top:496px"><svg class="fi" style="left:50px" width="16" height="14" viewBox="0 0 16 14"><rect x="2" y="1" width="12" height="12" fill="#f7c427"/><text x="13.300" y="11.800" font-family="Liberation Sans,sans-serif" font-size="7" font-weight="bold" fill="#3a3000" text-anchor="end">JS</text></svg><b style="left:72px">user.js</b></div><div class="tr" style="top:518px"><svg class="fi" style="left:49px" width="18" height="14" viewBox="0 0 18 14"><path d="M5.200 1 Q3.200 1 3.200 3 V5 Q3.200 7 1.400 7 Q3.200 7 3.200 9 V11 Q3.200 13 5.200 13 M12.800 1 Q14.800 1 14.800 3 V5 Q14.800 7 16.600 7 Q14.800 7 14.800 9 V11 Q14.800 13 12.800 13" fill="none" stroke="#f5b83d" stroke-width="1.400"/><circle cx="6.400" cy="9.600" r="0.800" fill="#f5b83d"/><circle cx="9" cy="9.600" r="0.800" fill="#f5b83d"/><circle cx="11.600" cy="9.600" r="0.800" fill="#f5b83d"/></svg><b style="left:72px">user.json</b></div><div class="tr sel" style="top:540px"><svg class="fi" width="16" height="15" viewBox="0 0 16 15" style="top:3px;left:50px"><path d="M3.2 0.5 h6.3 l4 4 v8.8 q0 1.2 -1.2 1.2 h-9.1 q-1.2 0 -1.2 -1.2 v-11.6 q0 -1.2 1.2 -1.2 z" fill="#8bc34a"/><path d="M9.300 0.500 v3.200 q0 1 1 1 h3.200 z" fill="#4a7a1c"/><path d="M6.400 7.800 l-1.700 1.800 l1.700 1.800 M9.200 7.800 l1.700 1.800 l-1.700 1.800" fill="none" stroke="#20380a" stroke-width="1.400"/></svg><b style="left:72px">user.wxml</b></div><div class="tr" style="top:562px"><svg class="fi" style="left:50px" width="16" height="14" viewBox="0 0 16 14"><path d="M3.2 0.8 h11.6 l-1.6 10.4 l-4.6 2 l-4.6 -2 l-0.4 -2.6 h2.4 l0.2 1 l2.4 1 l2.4 -1 l0.4 -2.6 h-8.6 l0.4 -2.2 h8.6 l0.2 -1.8 h-9.2 z" fill="#42a5f5"/></svg><b style="left:72px">user.wxss</b></div><div class="tr" style="top:584px"><i class="arr" style="left:29.5px"></i><svg class="fi" style="left:42px" width="16" height="14" viewBox="0 0 16 14"><path d="M1 2.6 q0 -1.1 1.1 -1.1 h3.9 l1.6 1.7 h6.3 q1.1 0 1.1 1.1 v7.1 q0 1.1 -1.1 1.1 h-11.8 q-1.1 0 -1.1 -1.1 z" fill="#ff9800"/><rect x="8" y="6.5" width="6.5" height="5.5" rx="0.8" fill="#ffe0b2"/></svg><b style="left:64px">video</b></div><div class="tr" style="top:606px"><i class="arr" style="left:29.5px"></i><svg class="fi" style="left:42px" width="16" height="14" viewBox="0 0 16 14"><path d="M1 2.6 q0 -1.1 1.1 -1.1 h3.9 l1.6 1.7 h6.3 q1.1 0 1.1 1.1 v7.1 q0 1.1 -1.1 1.1 h-11.8 q-1.1 0 -1.1 -1.1 z" fill="#2196f3"/><circle cx="11" cy="9.2" r="3.6" fill="#bbdefb"/><path d="M7.4 9.2 h7.2 M11 5.6 v7.2" stroke="#2196f3" stroke-width="0.7"/></svg><b style="left:64px">web</b></div><div class="tr" style="top:628px"><i class="arr" style="left:29.5px"></i><svg class="fi" style="left:42px" width="16" height="14" viewBox="0 0 16 14"><path d="M1 2.6 q0 -1.1 1.1 -1.1 h3.9 l1.6 1.7 h6.3 q1.1 0 1.1 1.1 v7.1 q0 1.1 -1.1 1.1 h-11.8 q-1.1 0 -1.1 -1.1 z" fill="#90a4ae"/></svg><b style="left:64px">weui</b></div><div class="tr" style="top:650px"><i class="arr" style="left:21.5px"></i><svg class="fi" style="left:34px" width="16" height="14" viewBox="0 0 16 14"><path d="M1 2.6 q0 -1.1 1.1 -1.1 h3.9 l1.6 1.7 h6.3 q1.1 0 1.1 1.1 v7.1 q0 1.1 -1.1 1.1 h-11.8 q-1.1 0 -1.1 -1.1 z" fill="#90a4ae"/></svg><b style="left:56px">pond</b></div><div class="tr" style="top:672px"><i class="arr" style="left:21.5px"></i><svg class="fi" style="left:34px" width="16" height="14" viewBox="0 0 16 14"><path d="M1 2.6 q0 -1.1 1.1 -1.1 h3.9 l1.6 1.7 h6.3 q1.1 0 1.1 1.1 v7.1 q0 1.1 -1.1 1.1 h-11.8 q-1.1 0 -1.1 -1.1 z" fill="#90a4ae"/></svg><b style="left:56px">pt</b></div><div class="tr" style="top:694px"><i class="arr" style="left:21.5px"></i><svg class="fi" style="left:34px" width="16" height="14" viewBox="0 0 16 14"><path d="M1 2.6 q0 -1.1 1.1 -1.1 h3.9 l1.6 1.7 h6.3 q1.1 0 1.1 1.1 v7.1 q0 1.1 -1.1 1.1 h-11.8 q-1.1 0 -1.1 -1.1 z" fill="#90a4ae"/></svg><b style="left:56px">scratch</b></div><div class="tr" style="top:716px"><i class="arr" style="left:21.5px"></i><svg class="fi" style="left:34px" width="16" height="14" viewBox="0 0 16 14"><path d="M1 2.6 q0 -1.1 1.1 -1.1 h3.9 l1.6 1.7 h6.3 q1.1 0 1.1 1.1 v7.1 q0 1.1 -1.1 1.1 h-11.8 q-1.1 0 -1.1 -1.1 z" fill="#90a4ae"/></svg><b style="left:56px">svcard</b></div><div class="tr" style="top:738px"><i class="arr" style="left:21.5px"></i><svg class="fi" style="left:34px" width="16" height="14" viewBox="0 0 16 14"><path d="M1 2.6 q0 -1.1 1.1 -1.1 h3.9 l1.6 1.7 h6.3 q1.1 0 1.1 1.1 v7.1 q0 1.1 -1.1 1.1 h-11.8 q-1.1 0 -1.1 -1.1 z" fill="#7cb342"/><rect x="7.6" y="5.6" width="6.6" height="6.6" rx="1.2" fill="#e8f5d0"/><circle cx="10.9" cy="8.9" r="1.7" fill="#7cb342"/></svg><b style="left:56px">utils</b></div><div class="tr" style="top:760px"><i class="arr" style="left:21.5px"></i><svg class="fi" style="left:34px" width="16" height="14" viewBox="0 0 16 14"><path d="M1 2.6 q0 -1.1 1.1 -1.1 h3.9 l1.6 1.7 h6.3 q1.1 0 1.1 1.1 v7.1 q0 1.1 -1.1 1.1 h-11.8 q-1.1 0 -1.1 -1.1 z" fill="#90a4ae"/></svg><b style="left:56px">vgoods</b></div><div class="tr" style="top:782px"><i class="arr" style="left:21.5px"></i><svg class="fi" style="left:34px" width="16" height="14" viewBox="0 0 16 14"><path d="M1 2.6 q0 -1.1 1.1 -1.1 h3.9 l1.6 1.7 h6.3 q1.1 0 1.1 1.1 v7.1 q0 1.1 -1.1 1.1 h-11.8 q-1.1 0 -1.1 -1.1 z" fill="#90a4ae"/></svg><b style="left:56px;letter-spacing:-0.5px">wuBaseWxss</b></div><div class="tr" style="top:804px"><i class="arr" style="left:21.5px"></i><svg class="fi" style="left:34px" width="16" height="14" viewBox="0 0 16 14"><path d="M1 2.6 q0 -1.1 1.1 -1.1 h3.9 l1.6 1.7 h6.3 q1.1 0 1.1 1.1 v7.1 q0 1.1 -1.1 1.1 h-11.8 q-1.1 0 -1.1 -1.1 z" fill="#90a4ae"/></svg><b style="left:56px">wxParse</b></div><div class="abs" style="left:29px;top:496px;width:1px;height:88px;background:#5a5a5a"></div></div><div class="sh" style="top:65px"><i class="arr" style="left:8px"></i><b>打开的编辑器</b></div>
<div class="sh" style="top:87px;box-shadow:0 2px 3px rgba(0,0,0,.45)"><i class="arrd" style="left:7px"></i><b>16.2前端</b></div></div>
<div id="ed" class="abs"><div id="tabs" class="abs">
<div class="tab1" style="left:0;width:120px;background:#353535;border-right:1px solid #2e2e2e"><svg class="abs" style="left:11px;top:9px" width="13" height="13" viewBox="0 0 13 13"><rect x="0.5" y="0.5" width="12" height="12" rx="1" fill="#f7c427"/><text x="11.6" y="11" font-family="Liberation Sans,sans-serif" font-size="6.5" font-weight="bold" fill="#3a3000" text-anchor="end">JS</text></svg><span class="abs" style="left:32px;top:0;color:#9a9a9a">siteinfo.js</span></div>
<div class="tab1" style="left:120px;width:120px;background:#2e2e2e"><svg class="abs" style="left:13px;top:8px" width="12" height="14" viewBox="0 0 13 15"><path d="M1.7 0.5 h5.8 l4 4 v8.8 q0 1.2 -1.2 1.2 h-8.6 q-1.2 0 -1.2 -1.2 v-11.6 q0 -1.2 1.2 -1.2 z" fill="#8bc34a"/><path d="M7.300 0.500 v3.200 q0 1 1 1 h3.200 z" fill="#4a7a1c"/><path d="M5 7.800 l-1.700 1.800 l1.700 1.800 M7.800 7.800 l1.700 1.800 l-1.700 1.800" fill="none" stroke="#20380a" stroke-width="1.400"/></svg><span class="abs" style="left:33px;top:0;color:#fff;font-style:italic;letter-spacing:-0.2px">user.wxml</span><svg class="abs" style="left:98px;top:10px" width="11" height="11" viewBox="0 0 11 11"><path d="M1 1 L10 10 M10 1 L1 10" stroke="#fff" stroke-width="1.3"/></svg></div>
</div>
<div id="bc" class="abs">
<svg class="abs" style="left:7px;top:5px" width="16" height="12" viewBox="0 0 16 12"><path d="M0.5 1.5 h1.4 M3.4 1.5 h12 M0.5 4.5 h1.4 M3.4 4.5 h12 M0.5 7.5 h1.4 M3.4 7.5 h12 M0.5 10.5 h1.4 M3.4 10.5 h12" stroke="#a0a0a0" stroke-width="1"/></svg>
<svg class="abs" style="left:39px;top:4px" width="12" height="14" viewBox="0 0 12 14"><path d="M1.200 0.800 h9.600 v11.800 l-4.800 -3.800 l-4.800 3.800 z" fill="none" stroke="#a8a8a8" stroke-width="1.300"/></svg>
<svg class="abs" style="left:68px;top:5px" width="14" height="12" viewBox="0 0 14 12"><path d="M13 6 h-11.5 M6 1.2 L1.2 6 L6 10.8" fill="none" stroke="#a8a8a8" stroke-width="1.2"/></svg>
<svg class="abs" style="left:96px;top:5px" width="14" height="12" viewBox="0 0 14 12"><path d="M1 6 h11.5 M8 1.2 L12.8 6 L8 10.8" fill="none" stroke="#555" stroke-width="1.2"/></svg>
<span style="left:126px;color:#8c8c8c">pages</span><svg class="abs" style="left:165px;top:6px" width="7" height="11" viewBox="0 0 7 11"><path d="M1 1 L5.600 5.500 L1 10" fill="none" stroke="#9a9a9a" stroke-width="1.200"/></svg><span style="left:177px;color:#8c8c8c">user</span><svg class="abs" style="left:206px;top:6px" width="7" height="11" viewBox="0 0 7 11"><path d="M1 1 L5.600 5.500 L1 10" fill="none" stroke="#9a9a9a" stroke-width="1.200"/></svg>
<svg class="abs" style="left:218px;top:4px" width="12" height="14" viewBox="0 0 13 15"><path d="M1.7 0.5 h5.8 l4 4 v8.8 q0 1.2 -1.2 1.2 h-8.6 q-1.2 0 -1.2 -1.2 v-11.6 q0 -1.2 1.2 -1.2 z" fill="#8bc34a"/><path d="M7.300 0.500 v3.200 q0 1 1 1 h3.200 z" fill="#4a7a1c"/><path d="M5 7.800 l-1.700 1.800 l1.700 1.800 M7.800 7.800 l1.700 1.800 l-1.700 1.800" fill="none" stroke="#20380a" stroke-width="1.400"/></svg>
<span style="left:238px;color:#c0c0c0;font-size:12.6px">user.wxml</span><svg class="abs" style="left:300px;top:6px" width="7" height="11" viewBox="0 0 7 11"><path d="M1 1 L5.600 5.500 L1 10" fill="none" stroke="#9a9a9a" stroke-width="1.200"/></svg>
<svg class="abs" style="left:311px;top:4px" width="14" height="14" viewBox="0 0 14 14"><path d="M0.800 4.600 L7.800 1.400 L13.400 3.800 L13 9.400 L6.400 12.600 L1 9.600 Z M0.800 4.600 L6.400 7.400 L13.400 3.800 M6.400 7.400 V12.600" fill="none" stroke="#5f9fd6" stroke-width="1.100" stroke-linejoin="round"/></svg>
<span style="left:333px">view.page.{{__page_classes}}</span><svg class="abs" style="left:497px;top:6px" width="7" height="11" viewBox="0 0 7 11"><path d="M1 1 L5.600 5.500 L1 10" fill="none" stroke="#9a9a9a" stroke-width="1.200"/></svg>
<svg class="abs" style="left:509px;top:4px" width="14" height="14" viewBox="0 0 14 14"><path d="M0.800 4.600 L7.800 1.400 L13.400 3.800 L13 9.400 L6.400 12.600 L1 9.600 Z M0.800 4.600 L6.400 7.400 L13.400 3.800 M6.400 7.400 V12.600" fill="none" stroke="#5f9fd6" stroke-width="1.100" stroke-linejoin="round"/></svg>
<span style="left:530px">view.body.after-navber</span>
</div>
<div id="code" class="abs"><div class="abs" style="left:68px;top:380px;width:562px;height:19px;background:#454545"></div><div class="abs" style="left:130px;top:381px;width:7px;height:18px;border:1px solid #888;background:#3a4238"></div><div class="abs" style="left:176px;top:381px;width:7px;height:18px;border:1px solid #888;background:#3a4238"></div><div class="ig" style="left:68.0px;top:38px;height:532px"></div><div class="ig" style="left:98.8px;top:95px;height:475px"></div><div class="ig" style="left:129.6px;top:152px;height:228px"></div><div class="ig" style="left:129.6px;top:418px;height:114px"></div><div class="ig" style="left:160.4px;top:266px;height:76px"></div><div class="ig" style="left:129.600px;top:418px;height:114px;background:#606060"></div><div class="ln" style="top:0px"><span class="no">1</span><span class="tx"><span class="t">&lt;include</span><span class="a"> src=</span><span class="a">&quot;</span><span class="s u">/commons/extension/extension</span><span class="a">&quot;</span><span class="t">&gt;</span><span class="v"></span><span class="t">&lt;/include</span><span class="t">&gt;</span><span class="v"></span></span></div><div class="ln" style="top:19px"><span class="no">2</span><svg class="fd" width="11" height="8" viewBox="0 0 11 8"><path d="M1 1.5 L5.5 6 L10 1.5" fill="none" stroke="#b8b8b8" stroke-width="1.2"/></svg><span class="tx"><span class="t">&lt;view</span><span class="a"> class=</span><span class="a">&quot;</span><span class="s">page </span><span class="y">{</span><span class="m">{</span><span class="v">__page_classes</span><span class="m">}</span><span class="y">}</span><span class="a">&quot;</span><span class="t">&gt;</span><span class="v"></span></span></div><div class="ln" style="top:38px"><span class="no">3</span><span class="tx"><span class="a">  </span><span class="t">&lt;include</span><span class="a"> src=</span><span class="a">&quot;</span><span class="s u">/commons/header/header</span><span class="a">&quot;</span><span class="t">&gt;</span><span class="v"></span><span class="t">&lt;/include</span><span class="t">&gt;</span><span class="v"></span></span></div><div class="ln" style="top:57px"><span class="no">4</span><svg class="fd" width="11" height="8" viewBox="0 0 11 8"><path d="M1 1.5 L5.5 6 L10 1.5" fill="none" stroke="#b8b8b8" stroke-width="1.2"/></svg><span class="tx"><span class="a">  </span><span class="t">&lt;view</span><span class="a"> class=</span><span class="a">&quot;</span><span class="s">body after-navber</span><span class="a">&quot;</span><span class="t">&gt;</span><span class="v"></span></span></div><div class="ln" style="top:76px"><span class="no">5</span><svg class="fd" width="11" height="8" viewBox="0 0 11 8"><path d="M1 1.5 L5.5 6 L10 1.5" fill="none" stroke="#b8b8b8" stroke-width="1.2"/></svg><span class="tx"><span class="a">    </span><span class="t">&lt;view</span><span class="a"> style=</span><span class="a">&quot;</span><span class="s">position:relative;background:</span><span class="y">{</span><span class="m">{</span><span class="v">all_color</span><span class="v"> </span><span class="y">&amp;&amp;</span><span class="v"> </span><span class="v">all_color</span><span class="v"> </span><span class="s">!=&#x27;&#x27;?</span><span class="v">all_color</span><span class="s">:</span><span class="s">&#x27;#ff4544&#x27;</span><span class="m">}</span><span class="y">}</span><span class="a">&quot;</span><span class="t">&gt;</span><span class="v"></span></span></div><div class="ln" style="top:95px"><span class="no">6</span><svg class="fd" width="11" height="8" viewBox="0 0 11 8"><path d="M1 1.5 L5.5 6 L10 1.5" fill="none" stroke="#b8b8b8" stroke-width="1.2"/></svg><span class="tx"><span class="a">      </span><span class="t">&lt;view</span><span class="a"> class=</span><span class="a">&quot;</span><span class="s">user-info flex-row</span><span class="a">&quot;</span><span class="a"> wx:if=</span><span class="a">&quot;</span><span class="y">{</span><span class="m">{</span><span class="v">style.top</span><span class="s">==0</span><span class="v"> </span><span class="y">&amp;&amp;</span><span class="v"> </span><span class="v">user_info</span><span class="m">}</span><span class="y">}</span><span class="a">&quot;</span><span class="t">&gt;</span><span class="v"></span></span></div><div class="ln" style="top:114px"><span class="no">7</span><span class="tx"><span class="a">        </span><span class="t">&lt;image</span><span class="a"> class=</span><span class="a">&quot;</span><span class="s">user-info-bg</span><span class="a">&quot;</span><span class="a"> mode=</span><span class="a">&quot;</span><span class="s">aspectFill</span><span class="a">&quot;</span><span class="a"> src=</span><span class="a">&quot;</span><span class="u" style="text-decoration-color:#d8d8d8"><span class="y">{</span><span class="m">{</span><span class="v">user_center_bg</span></span><span class="m">}</span><span class="y">}</span><span class="a">&quot;</span><span class="t">&gt;</span><span class="v"></span><span class="t">&lt;/image</span><span class="t">&gt;</span><span class="v"></span></span></div><div class="ln" style="top:133px"><span class="no">8</span><svg class="fd" width="11" height="8" viewBox="0 0 11 8"><path d="M1 1.5 L5.5 6 L10 1.5" fill="none" stroke="#b8b8b8" stroke-width="1.2"/></svg><span class="tx"><span class="a">        </span><span class="t">&lt;view</span><span class="a"> class=</span><span class="a">&quot;</span><span class="s">flex-grow-1 flex-y-center flex-row userinfo-name</span><span class="a">&quot;</span><span class="t">&gt;</span><span class="v"></span></span></div><div class="ln" style="top:152px"><span class="no">9</span><svg class="fd" width="11" height="8" viewBox="0 0 11 8"><path d="M1 1.5 L5.5 6 L10 1.5" fill="none" stroke="#b8b8b8" stroke-width="1.2"/></svg><span class="tx"><span class="a">          </span><span class="t">&lt;view</span><span class="a"> class=</span><span class="a">&quot;</span><span class="s">flex-grow-0</span><span class="a">&quot;</span><span class="t">&gt;</span><span class="v"></span></span></div><div class="ln" style="top:171px"><span class="no">10</span><span class="tx"><span class="a">            </span><span class="t">&lt;image</span><span class="a"> class=</span><span class="a">&quot;</span><span class="s">avatar</span><span class="a">&quot;</span><span class="a"> src=</span><span class="a">&quot;</span><span class="u" style="text-decoration-color:#d8d8d8"><span class="y">{</span><span class="m">{</span><span class="v">user_info.avatar_url</span></span><span class="m">}</span><span class="y">}</span><span class="a">&quot;</span><span class="t">&gt;</span><span class="v"></span><span class="t">&lt;/image</span><span class="t">&gt;</span><span class="v"></span></span></div><div class="ln" style="top:190px"><span class="no">11</span><span class="tx"><span class="a">          </span><span class="t">&lt;/view</span><span class="t">&gt;</span><span class="v"></span></span></div><div class="ln" style="top:209px"><span class="no">12</span><svg class="fd" width="11" height="8" viewBox="0 0 11 8"><path d="M1 1.5 L5.5 6 L10 1.5" fill="none" stroke="#b8b8b8" stroke-width="1.2"/></svg><span class="tx"><span class="a">          </span><span class="t">&lt;view</span><span class="a"> class=</span><span class="a">&quot;</span><span class="s">flex-grow-1</span><span class="a">&quot;</span><span class="t">&gt;</span><span class="v"></span></span></div><div class="ln" style="top:228px"><span class="no">13</span><span class="tx"><span class="a">            </span><span class="t">&lt;text</span><span class="a"> class=</span><span class="a">&quot;</span><span class="s">user-name</span><span class="a">&quot;</span><span class="t">&gt;</span><span class="y">{</span><span class="m">{</span><span class="v">user_info.nickname</span><span class="m">}</span><span class="y">}</span><span class="t">&lt;/text</span><span class="t">&gt;</span><span class="v"></span></span></div><div class="ln" style="top:247px"><span class="no">14</span><svg class="fd" width="11" height="8" viewBox="0 0 11 8"><path d="M1 1.5 L5.5 6 L10 1.5" fill="none" stroke="#b8b8b8" stroke-width="1.2"/></svg><span class="tx"><span class="a">            </span><span class="t">&lt;view</span><span class="a"> bindtap=</span><span class="a">&quot;</span><span class="y">{</span><span class="m">{</span><span class="v">next_level</span><span class="y">||</span><span class="v">user_info</span><span class="y">&amp;&amp;</span><span class="v">user_info.level</span><span class="s">!=-1?</span><span class="s">&#x27;member&#x27;</span><span class="s">:</span><span class="s">&#x27;&#x27;</span><span class="m">}</span><span class="y">}</span><span class="a">&quot;</span><span class="t">&gt;</span><span class="v"></span></span></div><div class="ln" style="top:266px"><span class="no">15</span><svg class="fd" width="11" height="8" viewBox="0 0 11 8"><path d="M1 1.5 L5.5 6 L10 1.5" fill="none" stroke="#b8b8b8" stroke-width="1.2"/></svg><span class="tx"><span class="a">              </span><span class="t">&lt;view</span><span class="a"> class=</span><span class="a">&quot;</span><span class="s">level-name flex-y-bottom</span><span class="a">&quot;</span><span class="t">&gt;</span><span class="v"></span></span></div><div class="ln" style="top:285px"><span class="no">16</span><span class="tx"><span class="a">                </span><span class="t">&lt;image</span><span class="a"> src=</span><span class="a">&quot;</span><span class="u" style="text-decoration-color:#d8d8d8"><span class="y">{</span><span class="m">{</span><span class="v">__wxapp_img.user.level.url</span></span><span class="m">}</span><span class="y">}</span><span class="a">&quot;</span><span class="t">&gt;</span><span class="v"></span><span class="t">&lt;/image</span><span class="t">&gt;</span><span class="v"></span></span></div><div class="ln" style="top:304px"><span class="no">17</span><span class="tx"><span class="a">                </span><span class="t">&lt;view</span><span class="a"> class=</span><span class="a">&quot;</span><span class="s">flex-y-center</span><span class="a">&quot;</span><span class="a"> style=</span><span class="a">&quot;</span><span class="s">height:100%;</span><span class="a">&quot;</span><span class="t">&gt;</span><span class="y">{</span><span class="m">{</span><span class="v">user_info.level_name</span><span class="m">}</span><span class="y">}</span><span class="t">&lt;/view</span><span class="t">&gt;</span><span class="v"></span></span></div><div class="ln" style="top:323px"><span class="no">18</span><span class="tx"><span class="a">              </span><span class="t">&lt;/view</span><span class="t">&gt;</span><span class="v"></span></span></div><div class="ln" style="top:342px"><span class="no">19</span><span class="tx"><span class="a">            </span><span class="t">&lt;/view</span><span class="t">&gt;</span><span class="v"></span></span></div><div class="ln" style="top:361px"><span class="no">20</span><span class="tx"><span class="a">          </span><span class="t">&lt;/view</span><span class="t">&gt;</span><span class="v"></span></span></div><div class="ln" style="top:380px"><span class="no" style="color:#c6c6c6">21</span><span class="tx"><span class="a">        </span><span class="t">&lt;/view</span><span class="t">&gt;</span><span class="v"></span></span></div><div class="ln" style="top:399px"><span class="no">22</span><svg class="fd" width="11" height="8" viewBox="0 0 11 8"><path d="M1 1.5 L5.5 6 L10 1.5" fill="none" stroke="#b8b8b8" stroke-width="1.2"/></svg><span class="tx"><span class="a">        </span><span class="t">&lt;view</span><span class="a"> class=</span><span class="a">&quot;</span><span class="s">flex-grow-0 flex-y-center userinfo-addr</span><span class="a">&quot;</span><span class="t">&gt;</span><span class="v"></span></span></div><div class="ln" style="top:418px"><span class="no">23</span><svg class="fd" width="11" height="8" viewBox="0 0 11 8"><path d="M1 1.5 L5.5 6 L10 1.5" fill="none" stroke="#b8b8b8" stroke-width="1.2"/></svg><span class="tx"><span class="a">          </span><span class="t">&lt;view</span><span class="a"> class=</span><span class="a">&quot;</span><span class="s">my-address</span><span class="a">&quot;</span><span class="a"> bindtap=</span><span class="a">&#x27;</span><span class="s">extract</span><span class="a">&#x27;</span><span class="a"> style=</span><span class="a">&quot;</span><span class="s">background:url(</span><span class="y">{</span><span class="m">{</span><span class="v">store.extract_bg</span><span class="m">}</span><span class="y">}</span><span class="s">)</span><span class="a">&quot;</span><span class="t">&gt;</span><span class="v"></span></span></div><div class="ln" style="top:437px"><span class="no">24</span><span class="tx"><span class="a">            </span><span class="t">&lt;view</span><span class="a"> style=</span><span class="a">&quot;</span><span class="s">margin-top:58rpx;color:</span><span class="y">{</span><span class="m">{</span><span class="v">all_color</span><span class="v"> </span><span class="y">&amp;&amp;</span><span class="v"> </span><span class="v">all_color</span><span class="v"> </span><span class="s">!=&#x27;&#x27;?</span><span class="v">all_color</span><span class="s">:</span><span class="s">&#x27;&#x27;</span><span class="m">}</span><span class="y">}</span><span class="a">&quot;</span><span class="t">&gt;</span><span class="v">取货码</span><span class="t">&lt;/view</span><span class="t">&gt;</span><span class="v"></span></span></div><div class="ln" style="top:456px"><span class="no">25</span><span class="tx"><span class="a">          </span><span class="t">&lt;/view</span><span class="t">&gt;</span><span class="v"></span></span></div><div class="ln" style="top:475px"><span class="no">26</span><svg class="fd" width="11" height="8" viewBox="0 0 11 8"><path d="M1 1.5 L5.5 6 L10 1.5" fill="none" stroke="#b8b8b8" stroke-width="1.2"/></svg><span class="tx"><span class="a">          </span><span class="t">&lt;view</span><span class="a"> class=</span><span class="a">&quot;</span><span class="s">my-address</span><span class="a">&quot;</span><span class="a"> bindtap=</span><span class="a">&quot;</span><span class="s">saoma</span><span class="a">&quot;</span><span class="a"> style=</span><span class="a">&quot;</span><span class="s">background:url(</span><span class="y">{</span><span class="m">{</span><span class="v">store.saoma_bg</span><span class="m">}</span><span class="y">}</span><span class="s">)</span><span class="a">&quot;</span><span class="t">&gt;</span><span class="v"></span></span></div><div class="ln" style="top:494px"><span class="no">27</span><span class="tx"><span class="a">            </span><span class="t">&lt;view</span><span class="a"> style=</span><span class="a">&quot;</span><span class="s">margin-top:58rpx;color:</span><span class="y">{</span><span class="m">{</span><span class="v">all_color</span><span class="v"> </span><span class="y">&amp;&amp;</span><span class="v"> </span><span class="v">all_color</span><span class="v"> </span><span class="s">!=&#x27;&#x27;?</span><span class="v">all_color</span><span class="s">:</span><span class="s">&#x27;&#x27;</span><span class="m">}</span><span class="y">}</span><span class="a">&quot;</span><span class="t">&gt;</span><span class="v">扫一扫</span><span class="t">&lt;/view</span><span class="t">&gt;</span><span class="v"></span></span></div><div class="ln" style="top:513px"><span class="no">28</span><span class="tx"><span class="a">          </span><span class="t">&lt;/view</span><span class="t">&gt;</span><span class="v"></span></span></div><div class="ln" style="top:532px"><span class="no">29</span><span class="tx"><span class="a">        </span><span class="t">&lt;/view</span><span class="t">&gt;</span><span class="v"></span></span></div><div class="ln" style="top:551px"><span class="no">30</span><span class="tx"><span class="a">      </span><span class="t">&lt;/view</span><span class="t">&gt;</span><span class="v"></span></span></div></div>
<div id="panel" class="abs" style="left:0;top:623px;width:630px;height:188px"><div id="ptabs" class="abs" style="left:0;top:0;width:630px;height:30px">
<span style="left:20px;color:#e7e7e7">调试器</span><i class="abs" style="left:20px;top:28px;width:33px;height:1px;background:#e0e0e0"></i>
<i class="abs" style="left:61px;top:7px;width:33px;height:17px;border-radius:9px;background:#464646"></i><span style="left:67px;color:#ddd">2, 52</span>
<span style="left:114px">问题</span><span style="left:156px;color:#e7e7e7">输出</span><span style="left:197px">终端</span><span style="left:239px">代码质量</span>
</div>
<div id="dtabs" class="abs">
<svg class="abs" style="left:9px;top:6px" width="16" height="16" viewBox="0 0 16 16"><path d="M12.5 5.5 v-3 q0 -1 -1 -1 h-9 q-1 0 -1 1 v9 q0 1 1 1 h3" fill="none" stroke="#b0b0b0" stroke-width="1.2"/><path d="M7 6.6 L14.6 9.8 L11.4 11 L13.6 14.4 L12.2 15.2 L10 11.8 L7.8 14 z" fill="#b0b0b0"/></svg>
<i class="abs" style="left:34px;top:5px;width:1px;height:17px;background:#4a4a4a"></i>
<span style="left:53px">Wxml</span>
<i class="abs" style="left:95px;top:0;width:65px;height:26px;background:#000"></i><span style="left:106px;color:#fff">Console</span>
<span style="left:172px">Sources</span><span style="left:237px">Network</span><span style="left:306px">Performance</span><span style="left:397px">Memory</span><span style="left:465px">AppData</span><span style="left:535px">Storage</span><span style="left:599px">Security</span>
</div>
<div id="dtool" class="abs">
<svg class="abs" style="left:8px;top:6px" width="16" height="15" viewBox="0 0 16 15"><rect x="0.6" y="0.6" width="14.8" height="12.8" rx="1" fill="none" stroke="#a8a8a8" stroke-width="1.2"/><path d="M4.6 0.6 v12.8" stroke="#a8a8a8" stroke-width="1.2"/><path d="M7.4 3.8 L12 7 L7.4 10.2 z" fill="#a8a8a8"/></svg>
<svg class="abs" style="left:37px;top:6px" width="15" height="15" viewBox="0 0 15 15"><circle cx="7.5" cy="7.5" r="6" fill="none" stroke="#a8a8a8" stroke-width="1.6"/><path d="M3.3 3.3 L11.7 11.7" stroke="#a8a8a8" stroke-width="1.6"/></svg>
<i class="abs" style="left:63px;top:5px;width:1px;height:18px;background:#4a4a4a"></i>
<span class="abs nw" style="left:72px;top:5px;font-size:12px;line-height:18px;color:#e8e8e8">appservice (#2)</span>
<i class="abs" style="left:193px;top:11px;width:0;height:0;border-left:3.5px solid transparent;border-right:3.5px solid transparent;border-top:8px solid #9a9a9a"></i>
<i class="abs" style="left:209px;top:5px;width:1px;height:18px;background:#4a4a4a"></i>
<svg class="abs" style="left:219px;top:7px" width="18" height="13" viewBox="0 0 18 13"><path d="M0.8 6.5 q8.2 -10.4 16.4 0 q-8.2 10.4 -16.4 0 z" fill="#a8a8a8"/><circle cx="9" cy="6.5" r="3.2" fill="#333"/><circle cx="9" cy="6.5" r="1.6" fill="#a8a8a8"/></svg>
<i class="abs" style="left:246px;top:5px;width:1px;height:18px;background:#4a4a4a"></i>
<div class="abs" style="left:253px;top:3px;width:251px;height:22px;background:#262626;border:1px solid #5a5a5a"><span class="abs nw" style="left:5px;top:2px;font-size:12px;line-height:18px;color:#d8d8d8">Filter</span></div>
<span class="abs nw" style="left:511px;top:5px;font-size:12px;line-height:18px;color:#d8d8d8">Default levels</span>
<i class="abs" style="left:587px;top:11px;width:0;height:0;border-left:3.5px solid transparent;border-right:3.5px solid transparent;border-top:8px solid #9a9a9a"></i>
</div>
<div id="cons" class="abs"><div style="top:2px;left:10.2px">   Now you can provide attr `wx:key` for a `wx:for` to improve performance.</div><div style="top:16px;left:10.2px">    107 |       &lt;view class=&#x27;dialog_ex&#x27;&gt;<span style="font-size:12px">您的提取码</span>&lt;/view&gt;</div><div style="top:30px;left:10.2px">    108 |       &lt;view class=&quot;dialog_num&quot;&gt;</div><div style="top:44px;left:10.2px">  &gt; 109 |         &lt;text wx:for=&quot;{{take_code}}&quot;&gt;{{item}}&lt;/text&gt;</div><div style="top:58px;left:10.2px">        |          ^</div><div style="top:72px;left:10.2px">    110 |       &lt;/view&gt;</div><div style="top:86px;left:10.2px">    111 |       &lt;view class=&#x27;dialog_img&#x27;&gt;</div><div style="top:100px;left:10.2px">    112 |         &lt;image catchtap=&quot;bigImg&quot; src=&quot;{{user_info.extract}}&quot;&gt;&lt;/image&gt;</div></div></div>
</div>
<div class="abs" style="left:0;top:0;width:1314px;height:903px;border:1px solid #707070;pointer-events:none;z-index:50"></div>
</body>
</html>
